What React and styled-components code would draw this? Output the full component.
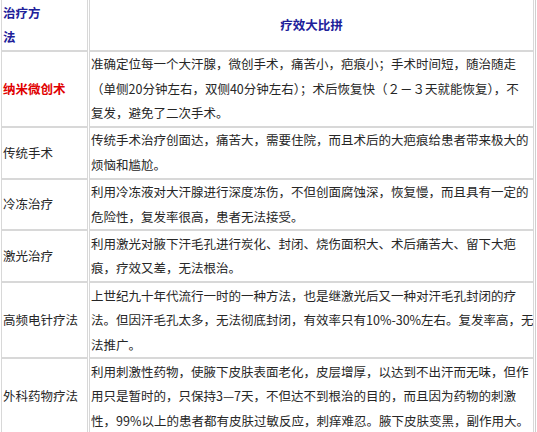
import React from "react";
import styled, { createGlobalStyle } from "styled-components";

const Global = createGlobalStyle`
  html, body { margin: 0; padding: 0; background: #ffffff; overflow: hidden; }
  body { font-family: "Noto Sans CJK SC", "Noto Sans", sans-serif; }
`;

const Table = styled.table`
  width: 537px;
  border-collapse: separate;
  border-spacing: 1px 0;
  border: 1px solid #cfcfcf;
  margin: -2px 0 0 -1px;
  font-family: "Noto Sans CJK SC", "Noto Sans", sans-serif;
  font-size: 12.5px;
  line-height: 24.6px;
  color: #262626;
  table-layout: fixed;
`;

const Cell = styled.td`
  border: 1px solid #d8d8d8;
  padding: 0.5px 1px 0;
  vertical-align: ${(p) => (p.$middle ? "middle" : "top")};
  text-align: ${(p) => (p.$center ? "center" : "left")};
  white-space: nowrap;
  overflow: hidden;
`;

const HeadText = styled.span`
  color: #20209a;
  font-weight: bold;
`;

const Hot = styled.span`
  color: #e00000;
  font-weight: bold;
`;

const Line = styled.div``;

const rows = [
  {
    name: "纳米微创术",
    hot: true,
    lines: [
      "准确定位每一个大汗腺，微创手术，痛苦小，疤痕小；手术时间短，随治随走",
      "（单侧20分钟左右，双侧40分钟左右）；术后恢复快（２－３天就能恢复），不",
      "复发，避免了二次手术。",
    ],
  },
  {
    name: "传统手术",
    lines: [
      "传统手术治疗创面达，痛苦大，需要住院，而且术后的大疤痕给患者带来极大的",
      "烦恼和尴尬。",
    ],
  },
  {
    name: "冷冻治疗",
    lines: [
      "利用冷冻液对大汗腺进行深度冻伤，不但创面腐蚀深，恢复慢，而且具有一定的",
      "危险性，复发率很高，患者无法接受。",
    ],
  },
  {
    name: "激光治疗",
    lines: [
      "利用激光对腋下汗毛孔进行炭化、封闭、烧伤面积大、术后痛苦大、留下大疤",
      "痕，疗效又差，无法根治。",
    ],
  },
  {
    name: "高频电针疗法",
    lines: [
      "上世纪九十年代流行一时的一种方法，也是继激光后又一种对汗毛孔封闭的疗",
      "法。但因汗毛孔太多，无法彻底封闭，有效率只有10%-30%左右。复发率高，无",
      "法推广。",
    ],
  },
  {
    name: "外科药物疗法",
    lines: [
      "利用刺激性药物，使腋下皮肤表面老化，皮层增厚，以达到不出汗而无味，但作",
      "用只是暂时的，只保持3—7天，不但达不到根治的目的，而且因为药物的刺激",
      "性，99%以上的患者都有皮肤过敏反应，刺痒难忍。腋下皮肤变黑，副作用大。",
    ],
  },
];

export default function App() {
  return (
    <>
      <Global />
      <Table>
        <colgroup>
          <col style={{ width: "87px" }} />
          <col />
        </colgroup>
        <tbody>
          <tr>
            <Cell>
              <HeadText>
                治疗方
                <br />
                法
              </HeadText>
            </Cell>
            <Cell $center $middle>
              <HeadText>疗效大比拼</HeadText>
            </Cell>
          </tr>
          {rows.map((r) => (
            <tr key={r.name}>
              <Cell $middle>{r.hot ? <Hot>{r.name}</Hot> : r.name}</Cell>
              <Cell>
                {r.lines.map((l, i) => (
                  <Line key={i}>{l}</Line>
                ))}
              </Cell>
            </tr>
          ))}
        </tbody>
      </Table>
    </>
  );
}
